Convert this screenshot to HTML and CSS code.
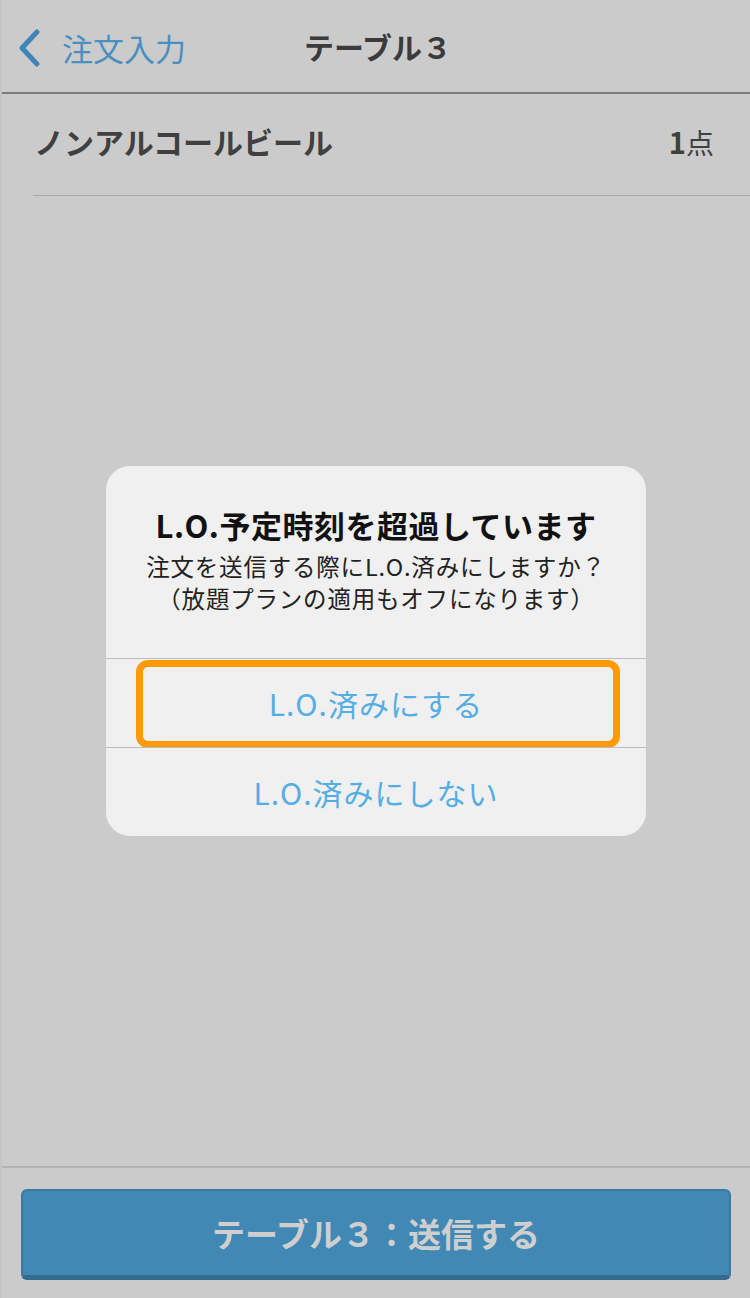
FILE: index.html
```html
<!doctype html>
<html lang="ja">
  <head>
    <meta charset="UTF-8" />
    <meta name="viewport" content="width=device-width, initial-scale=1.0" />
    <title>テーブル３</title>
    <link rel="stylesheet" href="styles.css">
  </head>
  <body>
    <div class="screen">
      <header class="navbar">
        <a class="back" href="#">
          <svg class="chevron" width="26" height="40" viewBox="0 0 26 40">
            <path d="M21 4 L6 20 L21 36" fill="none" stroke="#3f86b7" stroke-width="5" stroke-linecap="round" stroke-linejoin="round" />
          </svg>
          <span>注文入力</span>
        </a>
        <h1 class="title">テーブル３</h1>
      </header>

      <ul class="items">
        <li class="item">
          <span class="name">ノンアルコールビール</span>
          <span class="qty"><b>1</b>点</span>
        </li>
      </ul>

      <div class="spacer"></div>

      <footer class="footer">
        <button class="send-btn">テーブル３：送信する</button>
      </footer>

      <div class="alert">
        <div class="alert-body">
          <h2>L.O.予定時刻を超過しています</h2>
          <p>注文を送信する際にL.O.済みにしますか？<br />（放題プランの適用もオフになります）</p>
        </div>
        <div class="alert-action highlighted">L.O.済みにする</div>
        <div class="alert-action">L.O.済みにしない</div>
      </div>
    </div>
  </body>
</html>
```

FILE: styles.css
```css
body {
  margin: 0;
  background: #cbcbcb;
  font-family: "Noto Sans CJK JP", "Noto Sans", sans-serif;
}
.screen {
  position: relative;
  width: 750px;
  height: 1298px;
  display: flex;
  flex-direction: column;
  background: #cbcbcb;
  border-left: 2px solid #c4c4c4;
  box-sizing: border-box;
}
.navbar {
  position: relative;
  height: 92px;
  border-bottom: 2px solid #7b7b7b;
  display: flex;
  align-items: center;
  justify-content: center;
}
.back {
  position: absolute;
  left: 14px;
  top: 25px;
  display: flex;
  align-items: center;
  gap: 20px;
  color: #4a8fbf;
  text-decoration: none;
  font-size: 31px;
}
.title {
  margin: 0;
  font-size: 30px;
  font-weight: 700;
  color: #3b3b3b;
  padding-left: 4px;
}
.items {
  list-style: none;
  margin: 0;
  padding: 0 0 0 31px;
}
.item {
  height: 102px;
  display: flex;
  align-items: center;
  justify-content: space-between;
  padding: 0 36px 8px 1px;
  box-sizing: border-box;
  border-bottom: 1px solid #a9a9a9;
  color: #404040;
}
.name {
  font-size: 30px;
  font-weight: 700;
}
.qty {
  font-size: 28px;
}
.qty b {
  font-size: 29px;
}
.spacer {
  flex: 1;
}
.footer {
  border-top: 2px solid #b3b3b3;
  padding: 21px 19px 18px 19px;
}
.send-btn {
  width: 100%;
  height: 91px;
  border: 2px solid #3a7aa2;
  border-bottom-width: 5px;
  border-bottom-color: #346a8c;
  border-radius: 6px;
  background: #4189b4;
  color: #cfcfcf;
  font-family: inherit;
  font-size: 33px;
  font-weight: 700;
}
.alert {
  position: absolute;
  left: 104px;
  top: 466px;
  width: 540px;
  background: #f0f0f0;
  border-radius: 24px;
  overflow: hidden;
}
.alert-body {
  height: 192px;
  box-sizing: border-box;
  padding-top: 36px;
  text-align: center;
}
.alert-body h2 {
  margin: 0;
  font-size: 31px;
  font-weight: 700;
  letter-spacing: 0.5px;
  line-height: 46px;
  color: #111;
}
.alert-body p {
  margin: 2px 0 0;
  font-size: 23.5px;
  letter-spacing: 0.8px;
  line-height: 32px;
  color: #222;
}
.alert-action {
  position: relative;
  height: 88px;
  border-top: 1px solid #bdbdbd;
  display: flex;
  align-items: center;
  justify-content: center;
  font-size: 30px;
  letter-spacing: 1px;
  color: #55aee3;
}
.highlighted::after {
  content: "";
  position: absolute;
  left: 30px;
  right: 26px;
  top: 1px;
  bottom: -1px;
  border: 7px solid #ff9a00;
  border-radius: 12px;
}
```
